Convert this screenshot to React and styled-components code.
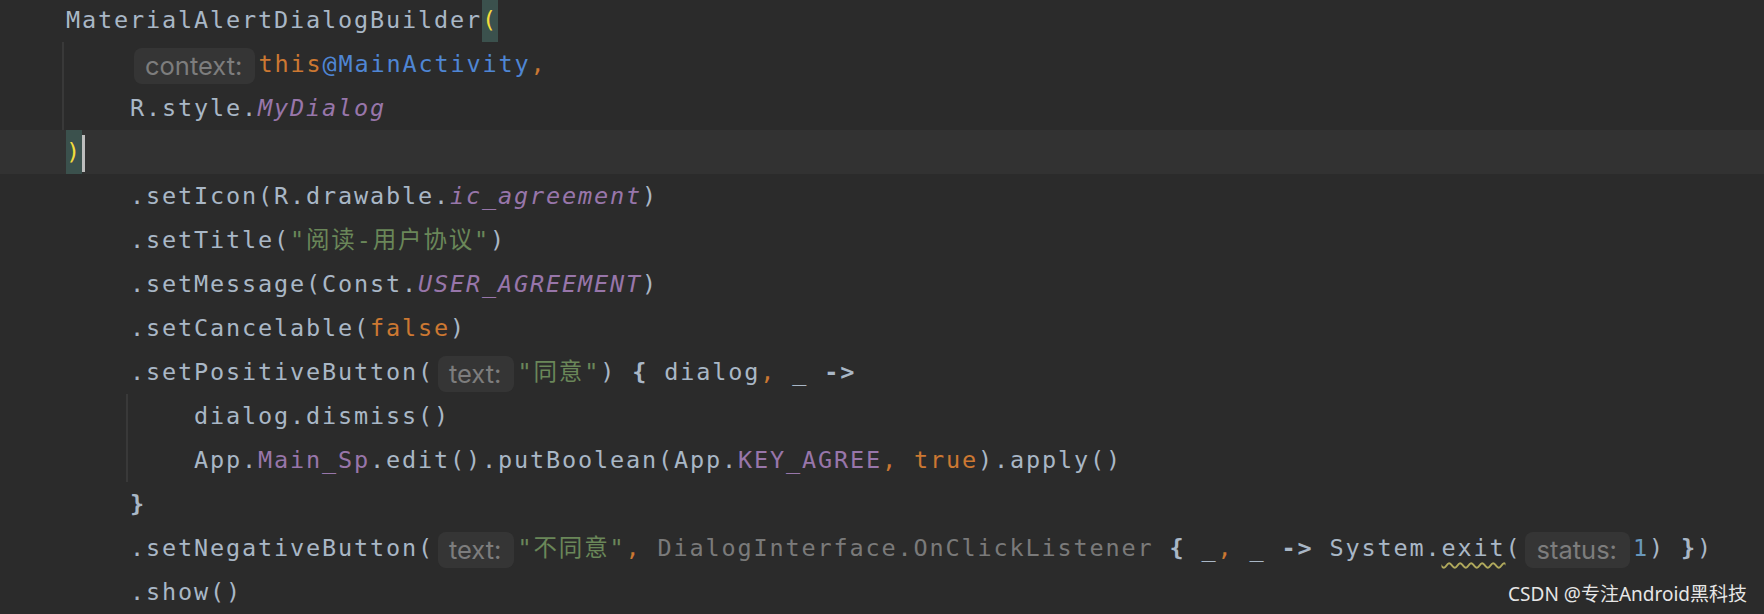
import React from 'react';
import styled, { createGlobalStyle } from 'styled-components';

const GlobalStyle = createGlobalStyle`
  html, body {
    margin: 0;
    padding: 0;
    background: #2b2b2b;
  }
`;

const IND = '    ';

const App = () => (
  <>
    <GlobalStyle />
    <Editor>
      <Code>
        <Line>
          MaterialAlertDialogBuilder<Brace>(</Brace>
        </Line>
        <Line $guide={62}>
          {IND}
          <Hint>context:</Hint>
          <Kw>this</Kw>
          <Label>@MainActivity</Label>
          <Kw>,</Kw>
        </Line>
        <Line $guide={62}>
          {IND}R.style.<Field $italic>MyDialog</Field>
        </Line>
        <Line $current>
          <Brace>)</Brace>
          <Caret />
        </Line>
        <Line>
          {IND}.setIcon(R.drawable.<Field $italic>ic_agreement</Field>)
        </Line>
        <Line>
          {IND}.setTitle(<Str>"阅读-用户协议"</Str>)
        </Line>
        <Line>
          {IND}.setMessage(Const.<Field $italic>USER_AGREEMENT</Field>)
        </Line>
        <Line>
          {IND}.setCancelable(<Kw>false</Kw>)
        </Line>
        <Line>
          {IND}.setPositiveButton(
          <Hint>text:</Hint>
          <Str>"同意"</Str>) <Bold>{'{'}</Bold> dialog<Kw>,</Kw> _ <Bold>-&gt;</Bold>
        </Line>
        <Line $guide={126}>
          {IND}
          {IND}dialog.dismiss()
        </Line>
        <Line $guide={126}>
          {IND}
          {IND}App.<Field>Main_Sp</Field>.edit().putBoolean(App.<Field>KEY_AGREE</Field>
          <Kw>,</Kw> <Kw>true</Kw>).apply()
        </Line>
        <Line>
          {IND}
          <Bold>{'}'}</Bold>
        </Line>
        <Line>
          {IND}.setNegativeButton(
          <Hint>text:</Hint>
          <Str>"不同意"</Str>
          <Kw>,</Kw> <Muted>DialogInterface.OnClickListener</Muted> <Bold>{'{'}</Bold> _<Kw>,</Kw> _{' '}
          <Bold>-&gt;</Bold> System.<Warn>exit</Warn>(
          <Hint>status:</Hint>
          <Num>1</Num>) <Bold>{'}'}</Bold>)
        </Line>
        <Line>{IND}.show()</Line>
      </Code>
      <Watermark>CSDN @专注Android黑科技</Watermark>
    </Editor>
  </>
);

const Editor = styled.div`
  position: relative;
  height: 614px;
  overflow: hidden;
  background: #2b2b2b;
`;

const Code = styled.div`
  margin-top: -2px;
  font-family: 'DejaVu Sans Mono', 'Noto Sans CJK SC', monospace;
  font-size: 23.5px;
  letter-spacing: 1.85px;
  color: #a9b7c6;
`;

const Line = styled.div`
  position: relative;
  height: 44px;
  line-height: 44px;
  padding-left: 66px;
  white-space: pre;
  background: ${({ $current }) => ($current ? '#323232' : 'transparent')};

  &::before {
    content: '';
    display: ${({ $guide }) => ($guide ? 'block' : 'none')};
    position: absolute;
    top: 0;
    bottom: 0;
    left: ${({ $guide }) => $guide || 0}px;
    width: 2px;
    background: #393939;
  }
`;

const Kw = styled.span`
  color: #cc7832;
`;

const Str = styled.span`
  color: #6a8759;
`;

const Field = styled.span`
  color: #9876aa;
  font-style: ${({ $italic }) => ($italic ? 'italic' : 'normal')};
`;

const Label = styled.span`
  color: #4f86d4;
`;

const Num = styled.span`
  color: #6897bb;
`;

const Muted = styled.span`
  color: #7a7a7a;
`;

const Bold = styled.span`
  font-weight: bold;
`;

const Warn = styled.span`
  text-decoration: underline wavy #b0a95c;
  text-decoration-thickness: 1.5px;
  text-underline-offset: 6px;
`;

const Brace = styled.span`
  display: inline-block;
  height: 44px;
  background: #3b514d;
  color: #f2dc3c;
`;

const Caret = styled.span`
  display: inline-block;
  width: 3px;
  height: 37px;
  vertical-align: middle;
  background: #bdbdbd;
`;

const Hint = styled.span`
  display: inline-flex;
  align-items: center;
  height: 36px;
  margin: 0 3px 0 4px;
  padding: 0 13px 0 11px;
  border-radius: 8px;
  vertical-align: middle;
  background: #353535;
  color: #7d7d7d;
  font-family: Inter, 'Noto Sans', sans-serif;
  font-size: 25.5px;
  letter-spacing: 0;
  line-height: 1;
`;

const Watermark = styled.div`
  position: absolute;
  right: 17px;
  bottom: 10px;
  font-family: 'Noto Sans', 'Noto Sans CJK SC', sans-serif;
  font-size: 19px;
  line-height: 19px;
  color: #e6e6e6;
  white-space: nowrap;
`;

export default App;
